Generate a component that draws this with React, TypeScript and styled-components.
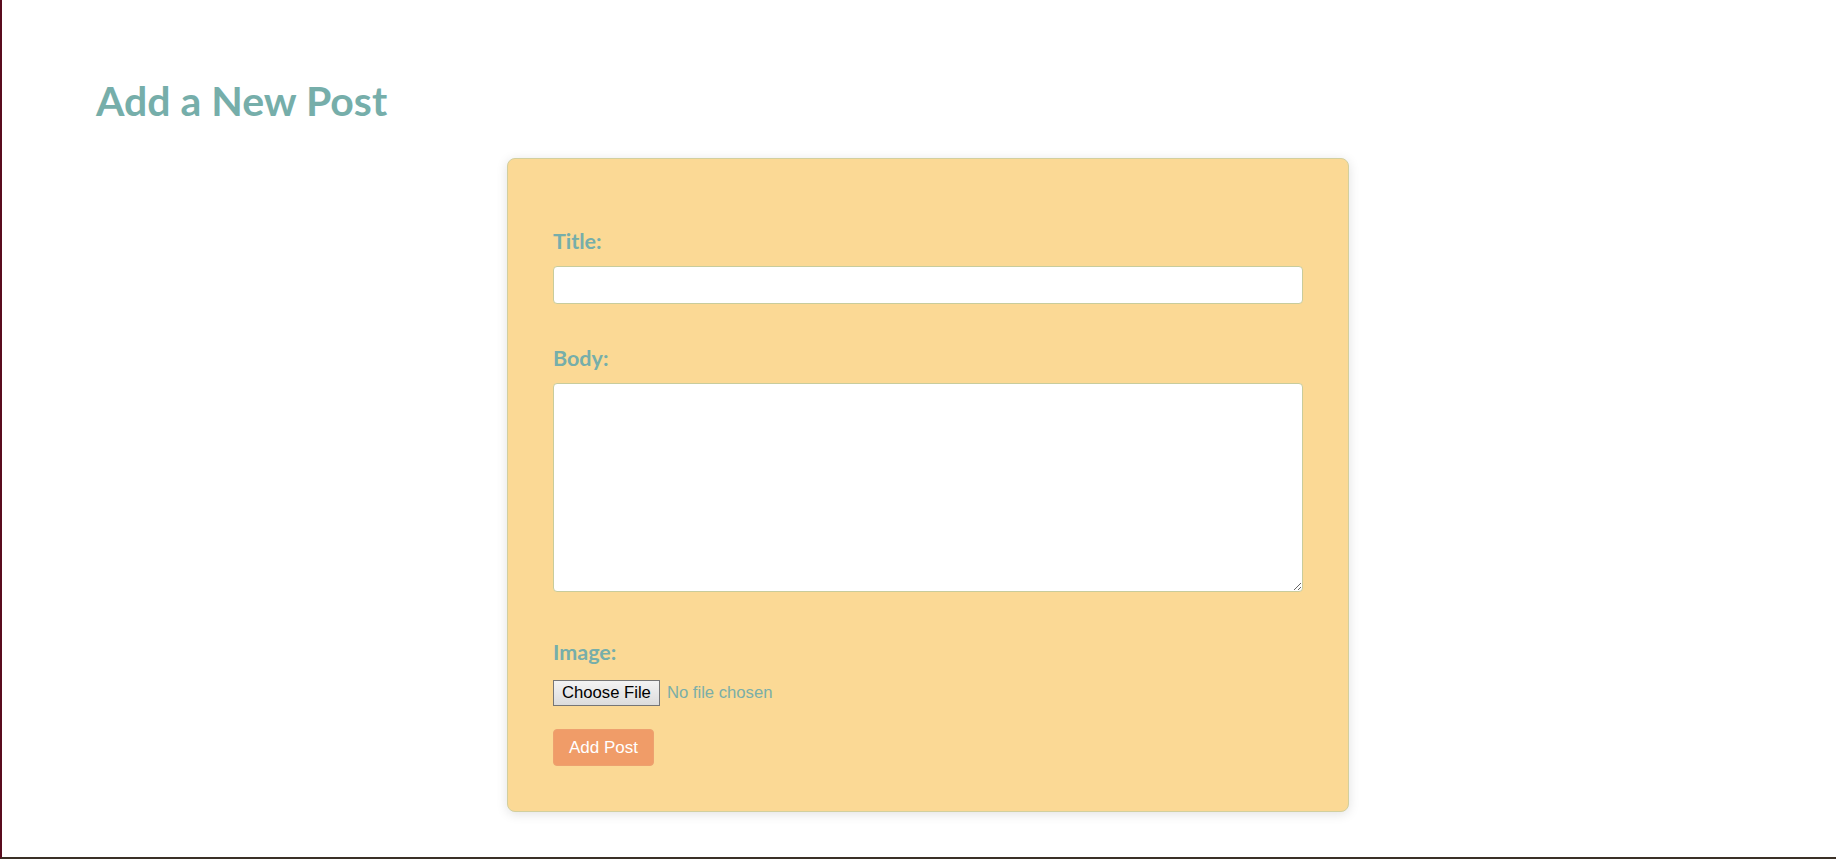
import React from "react";
import styled, { createGlobalStyle } from "styled-components";

const GlobalStyle = createGlobalStyle`
  html, body {
    margin: 0;
    padding: 0;
    background: #ffffff;
  }
  body {
    font-family: Lato, "Liberation Sans", sans-serif;
  }
`;

const Frame = styled.div`
  box-sizing: border-box;
  height: 859px;
  border-left: 2px solid #5a0c1e;
  border-bottom: 2px solid #3a3026;
  padding: 76px 0 0 94px;
  overflow: hidden;
`;

const Heading = styled.h1`
  margin: 0;
  font-family: Lato, sans-serif;
  font-weight: 700;
  font-size: 41px;
  line-height: 50px;
  color: #76aeaa;
`;

const Card = styled.div`
  box-sizing: border-box;
  width: 842px;
  margin: 32px 0 0 411px;
  padding: 45px;
  background: #fbd995;
  border: 1px solid #d2cf9e;
  border-radius: 8px;
  box-shadow: 0 2px 12px rgba(0, 0, 0, 0.12);
`;

const Form = styled.form`
  display: flex;
  flex-direction: column;
  padding-top: 25px;
`;

const Group = styled.div<{ $after: number }>`
  display: flex;
  flex-direction: column;
  margin-bottom: ${(p) => p.$after}px;
`;

const Label = styled.label<{ $below: number }>`
  display: block;
  font-family: Lato, sans-serif;
  font-weight: 700;
  font-size: 21.5px;
  line-height: 24px;
  color: #76aeaa;
  margin-bottom: ${(p) => p.$below}px;
`;

const TextInput = styled.input`
  display: block;
  box-sizing: border-box;
  width: 100%;
  height: 38px;
  margin: 0;
  padding: 6px 10px;
  background: #ffffff;
  border: 1px solid #c8cc9c;
  border-radius: 4px;
  font-size: 16px;
  outline: none;
`;

const TextArea = styled.textarea`
  display: block;
  box-sizing: border-box;
  width: 100%;
  height: 209px;
  margin: 0;
  padding: 6px 10px;
  background: #ffffff;
  border: 1px solid #c8cc9c;
  border-radius: 4px;
  font-size: 16px;
  outline: none;
`;

const FileInput = styled.input`
  display: block;
  height: 26px;
  margin: 0;
  padding: 0;
  font-family: "Liberation Sans", Arial, sans-serif;
  font-size: 16.67px;
  color: #7aaea8;
  line-height: 26px;

  &::file-selector-button {
    box-sizing: border-box;
    height: 26px;
    margin: 0 7px 0 0;
    padding: 0 8px;
    font-family: "Liberation Sans", Arial, sans-serif;
    font-size: 16.67px;
    color: #000000;
    background: linear-gradient(#f3f3f3, #dcdcdc);
    border: 1px solid #767676;
    border-radius: 0;
  }
`;

const SubmitButton = styled.button`
  align-self: flex-start;
  box-sizing: border-box;
  width: 101px;
  height: 37px;
  margin: 23px 0 0 0;
  padding: 0;
  font-family: "Liberation Sans", Arial, sans-serif;
  font-size: 17px;
  color: #ffffff;
  background: #f09c68;
  border: 1px solid #eda16f;
  border-radius: 4px;
  cursor: pointer;
`;

export default function App() {
  return (
    <>
      <GlobalStyle />
      <Frame>
        <Heading>Add a New Post</Heading>
        <Card>
          <Form onSubmit={(e) => e.preventDefault()}>
            <Group $after={42}>
              <Label htmlFor="title" $below={13}>Title:</Label>
              <TextInput id="title" type="text" />
            </Group>
            <Group $after={48}>
              <Label htmlFor="body" $below={13}>Body:</Label>
              <TextArea id="body" />
            </Group>
            <Group $after={0}>
              <Label htmlFor="image" $below={16}>Image:</Label>
              <FileInput id="image" type="file" />
            </Group>
            <SubmitButton type="submit">Add Post</SubmitButton>
          </Form>
        </Card>
      </Frame>
    </>
  );
}
